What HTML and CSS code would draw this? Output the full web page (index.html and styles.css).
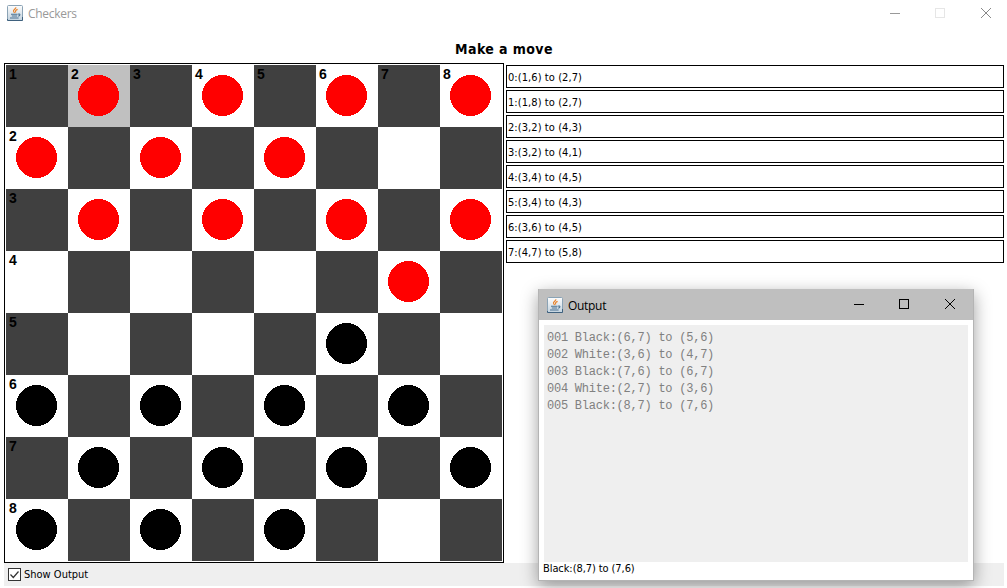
FILE: index.html
```html
<!DOCTYPE html>
<html lang="en">
<head>
<meta charset="utf-8">
<title>Checkers</title>
<link rel="stylesheet" href="styles.css">
</head>
<body>
<svg class="defs" aria-hidden="true">
  <defs>
    <linearGradient id="tile" x1="0" y1="0" x2="0" y2="1">
      <stop offset="0" stop-color="#fdfdfd"/><stop offset="1" stop-color="#c3d3df"/>
    </linearGradient>
    <symbol id="java" viewBox="0 0 16 16">
      <rect x=".5" y=".5" width="15" height="15" rx="1" fill="url(#tile)" stroke="#8ba3b5"/>
      <path d="M.5 14v1.5h15V12" fill="none" stroke="#3f617e"/>
      <path d="M8.8 2.2C9.4 4 5.6 4.7 6.6 6.5L7.6 8M10.6 4.4C8.6 5.2 8 6 8.8 7.6" fill="none" stroke="#e8822a" stroke-width="1.2"/>
      <path d="M4 9.2h6.6M4.8 11h5.4M3 13h8.6M11 9.2c2.6-.8 2.4 1.4.2 2" fill="none" stroke="#4a7191" stroke-width="1.1"/>
    </symbol>
  </defs>
</svg>
<div class="app">
  <header class="titlebar">
    <svg class="logo"><use href="#java"/></svg>
    <span class="caption">Checkers</span>
    <svg class="controls" viewBox="0 0 102 11">
      <path d="M0 5.5h10" stroke="#999"/>
      <rect x="45.5" y=".5" width="9" height="9" fill="none" stroke="#e6e6e6"/>
      <path d="M91 0l10 10M101 0l-10 10" stroke="#888"/>
    </svg>
  </header>
  <h1 class="prompt">Make a move</h1>
  <main class="content">
    <div class="board" id="board"></div>
    <ul class="moves">
      <li>0:(1,6) to (2,7)</li>
      <li>1:(1,8) to (2,7)</li>
      <li>2:(3,2) to (4,3)</li>
      <li>3:(3,2) to (4,1)</li>
      <li>4:(3,4) to (4,5)</li>
      <li>5:(3,4) to (4,3)</li>
      <li>6:(3,6) to (4,5)</li>
      <li>7:(4,7) to (5,8)</li>
    </ul>
  </main>
  <footer class="statusbar">
    <svg class="check" viewBox="0 0 13 13">
      <rect x=".5" y=".5" width="12" height="12" fill="#fff" stroke="#333"/>
      <path d="M2.5 6.5l2.8 3 5.2-6" fill="none" stroke="#333" stroke-width="1.2"/>
    </svg>
    <span class="check-label">Show Output</span>
  </footer>
</div>
<section class="output">
  <header class="output-title">
    <svg class="logo"><use href="#java"/></svg>
    <span class="caption">Output</span>
    <svg class="controls" viewBox="0 0 102 11">
      <path d="M0 5.5h10" stroke="#000"/>
      <rect x="45.5" y=".5" width="9" height="9" fill="none" stroke="#000"/>
      <path d="M91 0l10 10M101 0l-10 10" stroke="#000"/>
    </svg>
  </header>
  <pre class="log">001 Black:(6,7) to (5,6)
002 White:(3,6) to (4,7)
003 Black:(7,6) to (6,7)
004 White:(2,7) to (3,6)
005 Black:(8,7) to (7,6)</pre>
  <div class="last-move">Black:(8,7) to (7,6)</div>
</section>
<script src="board.js"></script>
</body>
</html>
```
FILE: styles.css
```css
* { box-sizing: border-box; }
body {
  margin: 0;
  width: 1007px;
  height: 588px;
  overflow: hidden;
  background: #fff;
  color: #000;
  font-family: "DejaVu Sans Condensed", "DejaVu Sans", sans-serif;
  font-size: 11px;
}
.defs { position: absolute; width: 0; height: 0; }
.app { display: flex; flex-direction: column; height: 588px; }
.titlebar, .output-title { display: flex; align-items: center; }
.titlebar { height: 28px; padding: 0 15px 2px 7px; }
.logo { width: 16px; height: 16px; flex: none; }
.caption { padding-top: 2px; font: 12px/16px "Open Sans", sans-serif; letter-spacing: -.3px; }
.titlebar .caption { margin-left: 5px; color: #999; }
.controls { width: 102px; height: 11px; margin-left: auto; flex: none; }
.prompt {
  margin: 0;
  height: 35px;
  padding: 12px 0 0 1px;
  text-align: center;
  font-size: 14px;
  line-height: 18px;
  letter-spacing: .4px;
}
.content { display: flex; gap: 2px; padding: 0 3px 0 4px; height: 500px; }
.board {
  display: grid;
  grid-template-columns: repeat(8, 62px);
  grid-template-rows: repeat(8, 62px);
  width: 500px;
  height: 500px;
  padding: 1px;
  border: 1px solid #000;
}
.square {
  display: grid;
  place-items: center;
  background: #fff;
}
.square > * { grid-area: 1 / 1; }
.dark { background: #404040; }
.selected { background: #c0c0c0; }
.piece { width: 41px; height: 41px; margin: 0 1px 1px 0; shape-rendering: crispEdges; }
.red { fill: #f00; }
.black { fill: #000; }
.number {
  place-self: start;
  padding: 1px 0 0 3px;
  font: bold 14px/16px "Liberation Sans", sans-serif;
}
.moves {
  display: flex;
  flex-direction: column;
  gap: 2px;
  flex: 1;
  margin: 0;
  padding: 2px 0 0;
  list-style: none;
}
.moves li {
  height: 23px;
  padding: 1px 1px 0;
  border: 1px solid #000;
  line-height: 21px;
  letter-spacing: .08px;
  white-space: nowrap;
}
.statusbar {
  display: flex;
  align-items: center;
  height: 23px;
  margin: 0 3px 0 4px;
  padding-left: 4px;
  background: #efefef;
}
.check { width: 13px; height: 13px; }
.check-label { margin-left: 3px; }
.output {
  position: absolute;
  left: 538px;
  top: 289px;
  width: 436px;
  height: 292px;
  display: flex;
  flex-direction: column;
  padding: 0 6px 4px;
  border: solid #b4b4b4;
  border-width: 0 1px 1px;
  background: #fff;
  box-shadow: 0 5px 16px 0 rgba(0, 0, 0, .38);
}
.output-title {
  height: 31px;
  flex: none;
  margin: 0 -6px 5px;
  padding: 0 17px 0 8px;
  background: #bfbfbf;
}
.output-title .caption { margin-left: 5px; }
.log {
  height: 237px;
  flex: none;
  margin: 0 -1px;
  padding: 5px 3px;
  background: #efefef;
  color: #808080;
  font: 12px/17px "Liberation Mono", monospace;
  letter-spacing: -.24px;
}
.last-move { margin-left: -2px; line-height: 14px; letter-spacing: -.08px; }
```
FILE: board.js
```javascript
// One string per row: r = red piece, b = black piece, . = empty square.
const rows = [
  ".r.r.r.r",
  "r.r.r...",
  ".r.r.r.r",
  "......r.",
  ".....b..",
  "b.b.b.b.",
  ".b.b.b.b",
  "b.b.b..."
];
const board = document.getElementById("board");
rows.forEach((row, y) => {
  [...row].forEach((piece, x) => {
    const square = document.createElement("div");
    square.className = "square" + ((x + y) % 2 ? "" : " dark");
    if (y === 0 && x === 1) square.classList.add("selected");
    let html = "";
    if (piece !== ".") {
      const side = piece === "r" ? "red" : "black";
      html += `<svg class="piece ${side}" viewBox="0 0 41 41"><circle cx="20.5" cy="20.5" r="20.5"/></svg>`;
    }
    if (y === 0 || x === 0) html += `<span class="number">${Math.max(x, y) + 1}</span>`;
    square.innerHTML = html;
    board.append(square);
  });
});
```
